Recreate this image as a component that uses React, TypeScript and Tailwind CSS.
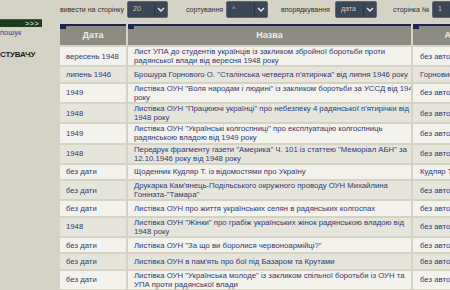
import React from "react";

interface DocRow {
    date: string;
    title: string[];
    author: string;
}

const rows: DocRow[] = [
    { date: "вересень 1948", title: ["Лист УПА до студентів українців із закликом збройної боротьби проти", "радянської влади від вересня 1948 року"], author: "без автора" },
    { date: "липень 1946", title: ["Брошура Горнового О. \"Сталінська четверта п'ятирічка\" від липня 1946 року"], author: "Горновий О." },
    { date: "1949", title: ["Листівка ОУН \"Воля народам і людині\" із закликом боротьби за УССД від 1949", "року"], author: "без автора" },
    { date: "1948", title: ["Листівка ОУН \"Працюючі українці\" про небезпеку 4 радянської п'ятирічки від", "1948 року"], author: "без автора" },
    { date: "1949", title: ["Листівка ОУН \"Українські колгоспниці\" про експлуатацію колгоспниць", "радянською владою від 1949 року"], author: "без автора" },
    { date: "1948", title: ["Передрук фрагменту газети \"Америка\" Ч. 101 із статтею \"Меморіал АБН\" за", "12.10.1946 року від 1948 року"], author: "без автора" },
    { date: "без дати", title: ["Щоденник Кудляр Т. із відомостями про Україну"], author: "Кудляр Т." },
    { date: "без дати", title: ["Друкарка Кам'янець-Подільського окружного проводу ОУН Михайлина", "Гоніната-\"Тамара\""], author: "без автора" },
    { date: "без дати", title: ["Листівка ОУН про життя українських селян в радянських колгоспах"], author: "без автора" },
    { date: "1948", title: ["Листівка ОУН \"Жінки\" про грабіж українських жінок радянською владою від", "1948 року"], author: "без автора" },
    { date: "без дати", title: ["Листівка ОУН \"За що ви боролися червоноармійці?\""], author: "без автора" },
    { date: "без дати", title: ["Листівка ОУН в пам'ять про бої під Базаром та Крутами"], author: "без автора" },
    { date: "без дати", title: ["Листівка ОУН \"Українська молоде\" із закликом спільної боротьби із ОУН та", "УПА проти радянської влади"], author: "без автора" },
    { date: "без дати", title: ["Видання Олександрійського надрайонного пункту інформації ОУН № 2 від", "травня 1948 року"], author: "без автора" },
];

const Chevron = () => (
    <svg width="8" height="5" viewBox="0 0 8 5" fill="none">
        <polyline points="1,1 4,4 7,1" stroke="#e8ecf0" strokeWidth="1.4" />
    </svg>
);

const Select = ({ value, width }: { value: string; width: string }) => (
    <div className={`flex h-[17px] shrink-0 overflow-hidden rounded-[2px] border border-[#5b6573] bg-[#3b4656] ${width}`}>
        <div className="flex flex-1 items-center pl-[5px] text-[7px] text-[#c9ccd0]">{value}</div>
        <div className="flex w-[13px] items-center justify-center border-l border-[#2c3542]">
            <Chevron />
        </div>
    </div>
);

const HeaderCell = ({ label, width }: { label: string; width: string }) => (
    <th className={`relative h-[21px] border-t-2 border-[#1c2454] bg-[#8d8c83] p-0 text-center align-middle text-[9px] font-bold text-[#ecebe4] ${width}`}>
        <span className="absolute left-0 top-0 h-[3px] w-[6px] bg-[#1c2454]" />
        {label}
    </th>
);

export default function App() {
    return (
        <div className="flex h-[290px] w-[450px] overflow-hidden bg-[#d4d3c5] font-['Liberation_Sans',Arial,sans-serif]">
            {/* sidebar, cut off at the left edge */}
            <div className="w-[60px] shrink-0">
                <div className="mt-[19px] flex h-[8px] w-[42px] items-center justify-end border-t border-[#3d5a3d] bg-[#1b3b1b] pr-[3px] text-[7px] font-bold leading-none tracking-[0.5px] text-[#c5c9c5]">
                    &gt;&gt;&gt;
                </div>
                <div className="mt-[1px] text-[7.5px] leading-[10px] text-[#34449a]">пошук</div>
                <div className="mt-[12px] text-[8px] font-bold leading-[10px] tracking-tight text-[#1d1d1d]">СТУВАЧУ</div>
            </div>

            <div className="flex min-w-0 flex-col">
                {/* filter bar */}
                <div className="flex h-[22px] shrink-0 items-start whitespace-nowrap pt-[1px] text-[7px] text-[#2f2f2f]">
                    <span className="w-[67px] shrink-0 pt-[4px] leading-[9px]">вивести на сторінку</span>
                    <Select value="20" width="w-[41px]" />
                    <span className="ml-[18px] w-[40px] shrink-0 pt-[4px] leading-[9px]">сортування</span>
                    <Select value="^" width="w-[42px]" />
                    <span className="ml-[13px] w-[54px] shrink-0 pt-[4px] leading-[9px]">впорядкування</span>
                    <Select value="дата" width="w-[42px]" />
                    <span className="ml-[16px] w-[39px] shrink-0 pt-[4px] leading-[9px]">сторінка №</span>
                    <Select value="1" width="w-[42px]" />
                </div>

                <table className="-ml-[2px] w-[447px] shrink-0 table-fixed border-separate border-spacing-[2px] text-[7.75px] text-[#2f3a73]">
                    <thead>
                        <tr>
                            <HeaderCell label="Дата" width="w-[66px]" />
                            <HeaderCell label="Назва" width="w-[283px]" />
                            <HeaderCell label="Автор" width="w-[90px]" />
                        </tr>
                    </thead>
                    <tbody>
                        {rows.map((row, i) => {
                            const bg = i % 2 === 0 ? "bg-[#f3f2ec]" : "bg-[#e6e5dc]";
                            return (
                                <tr key={i}>
                                    <td className={`h-[14.3px] whitespace-nowrap p-0 pl-[6px] align-middle leading-[9.15px] ${bg}`}>{row.date}</td>
                                    <td className={`h-[14.3px] overflow-hidden whitespace-nowrap p-0 pl-[6px] align-middle leading-[9.15px] ${bg}`}>
                                        {row.title.map((line, j) => (
                                            <div key={j}>{line}</div>
                                        ))}
                                    </td>
                                    <td className={`h-[14.3px] whitespace-nowrap p-0 pl-[7px] align-middle leading-[9.15px] ${bg}`}>{row.author}</td>
                                </tr>
                            );
                        })}
                    </tbody>
                </table>
            </div>
        </div>
    );
}
